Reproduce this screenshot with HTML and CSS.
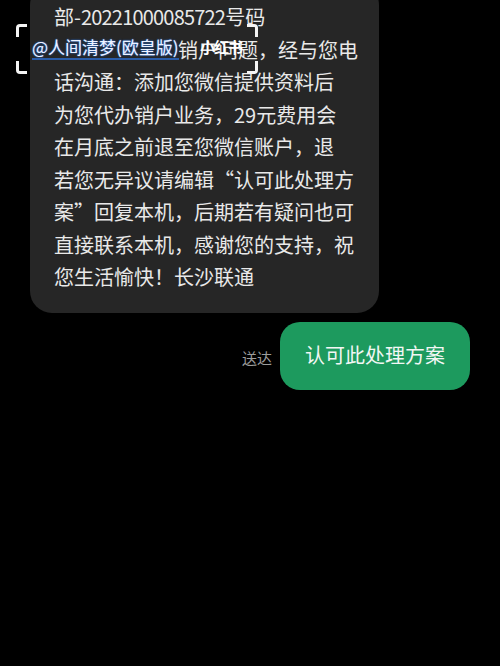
FILE: index.html
```html
<!DOCTYPE html>
<html lang="zh-CN">
<head>
<meta charset="utf-8">
<link rel="stylesheet" href="styles.css">
</head>
<body>
<div class="screen">
  <div class="chat">
    <div class="row-in">
      <div class="bubble-in">
        <div class="line">部-<span class="digits">20221000085722</span>号码</div>
        <div class="line"><span class="spacer"></span>销户问题，经与您电</div>
        <div class="line">话沟通：添加您微信提供资料后</div>
        <div class="line">为您代办销户业务，29元费用会</div>
        <div class="line">在月底之前退至您微信账户，退</div>
        <div class="line">若您无异议请编辑“认可此处理方</div>
        <div class="line">案”回复本机，后期若有疑问也可</div>
        <div class="line">直接联系本机，感谢您的支持，祝</div>
        <div class="line">您生活愉快！长沙联通</div>
      </div>
    </div>
    <div class="row-out">
      <span class="status">送达</span>
      <div class="bubble-out">认可此处理方案</div>
    </div>
  </div>

  <div class="watermark">
    <span class="corner tl"></span>
    <span class="corner bl"></span>
    <span class="corner tr"></span>
    <span class="corner br"></span>
    <span class="wm-user">@人间清梦(欧皇版)</span>
    <span class="wm-logo">小红书</span>
  </div>
</div>
</body>
</html>
```

FILE: styles.css
```css
html, body {
  margin: 0;
  padding: 0;
  background: #000;
}

body {
  font-family: "Noto Sans CJK SC", "Noto Sans", sans-serif;
  width: 500px;
  height: 666px;
  overflow: hidden;
}

.screen {
  position: relative;
  display: flex;
  flex-direction: column;
  width: 500px;
  height: 666px;
  background: #000;
  overflow: hidden;
}

.chat {
  display: flex;
  flex-direction: column;
  margin-top: -17px;
}

.row-in {
  display: flex;
  padding-left: 30px;
}

.bubble-in {
  width: 349px;
  box-sizing: border-box;
  background: #262626;
  border-radius: 22px;
  padding: 18px 0 19px 24px;
  color: #e9e9e9;
  font-size: 20px;
  line-height: 32.5px;
  white-space: nowrap;
}

.digits {
  letter-spacing: -0.8px;
}

.spacer {
  display: inline-block;
  width: 124px;
}

.row-out {
  display: flex;
  justify-content: flex-end;
  align-items: center;
  gap: 8px;
  padding-right: 30px;
  margin-top: 9px;
}

.status {
  color: #9c9c9c;
  font-size: 15px;
  line-height: 20px;
  margin-top: 4px;
}

.bubble-out {
  background: #1d9a5e;
  color: #f2f7f4;
  border-radius: 20px;
  font-size: 20px;
  line-height: 28px;
  padding: 19px 25px 21px 25px;
}

.watermark {
  position: absolute;
  left: 16px;
  top: 24px;
  width: 242px;
  height: 50px;
}

.corner {
  position: absolute;
  width: 8px;
  height: 10px;
  border-color: #f4f4f4;
  border-style: solid;
  border-width: 0;
}
.corner.tl { left: 0; top: 0; border-left-width: 3px; border-top-width: 3px; border-top-left-radius: 4px; }
.corner.bl { left: 0; bottom: 0; border-left-width: 3px; border-bottom-width: 3px; border-bottom-left-radius: 4px; }
.corner.tr { right: 0; top: 0; border-right-width: 3px; border-top-width: 3px; border-top-right-radius: 4px; }
.corner.br { right: 0; bottom: 0; border-right-width: 3px; border-bottom-width: 3px; border-bottom-right-radius: 4px; }

.wm-user {
  position: absolute;
  left: 16px;
  top: 12px;
  font-size: 17px;
  line-height: 22px;
  color: #eef3ff;
  text-shadow: 0 0 2px #2c6fd6, 0 0 1px #2c6fd6;
  border-bottom: 2px solid rgba(44, 111, 214, 0.75);
  white-space: nowrap;
}

.wm-logo {
  position: absolute;
  left: 184px;
  top: 12px;
  font-size: 15px;
  line-height: 22px;
  font-weight: 700;
  color: #ffffff;
  white-space: nowrap;
  letter-spacing: -1px;
}
```
